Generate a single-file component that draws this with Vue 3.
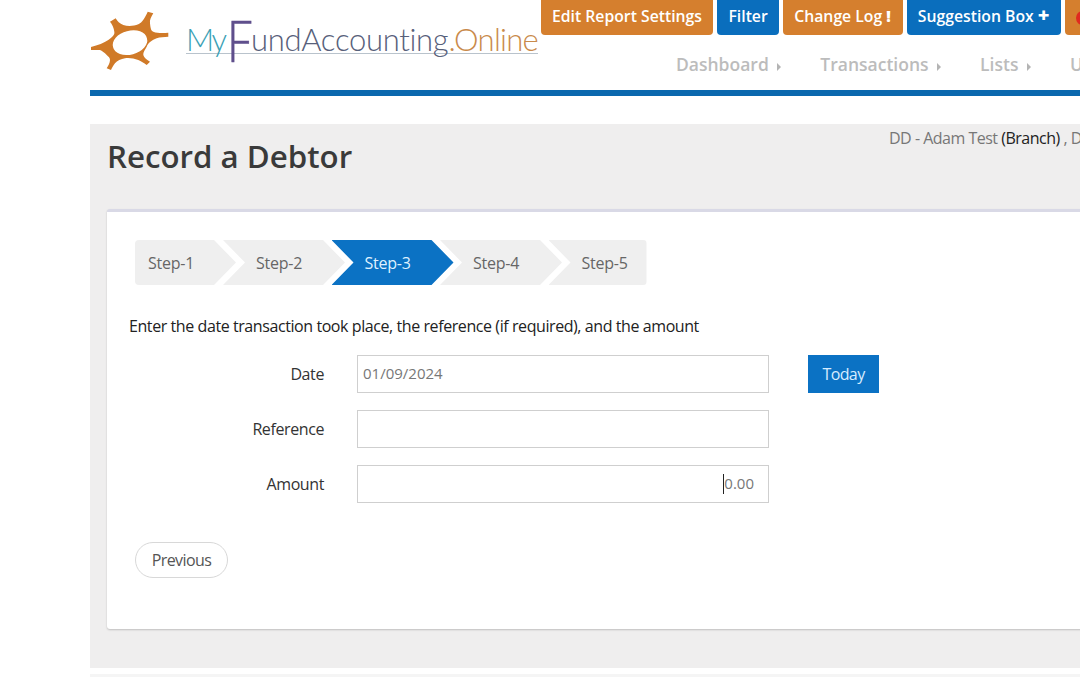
<script setup>
const steps = ['Step-1', 'Step-2', 'Step-3', 'Step-4', 'Step-5'];
const current = 2;
const navItems = ['Dashboard', 'Transactions', 'Lists', 'Users'];
</script>

<template>
  <div class="page">
    <header class="header">
      <div class="logo">
        <svg class="logo-mark" width="82" height="64" viewBox="0 0 82 64">
          <path fill="#d07a28" fill-rule="evenodd" d="M1 37 C8 35 14 33 18.3 30 C22 27 25 25 24.3 21.7 C24 18 22 14 20 11.7 L25.7 8.3 C27 11 30 14 33.3 15 C38 16.5 44 16 48.3 14.3 C52 13 56 6 57.7 1.7 L63.3 3.3 C61 7 59.5 10 60 13.3 C60.5 18 61 21 63.3 21.7 C68 23.5 74 23 78.3 22.7 L78.3 26.7 C74 27 70 27 66.7 28.3 C62 30 58 33 56.7 36.7 C55 40 53 42 53.3 45 C54 48 57 50 60 51.7 L56.7 55 C54 53 51 51 48.3 50 C44 48.5 39 47.5 35 48.3 C31 49 27 50.5 25 53.3 C23.5 55 22 58 21 60 L16.7 58.3 C18 56 20 53 20 50 C20 48 18.5 46.5 16.7 45 C14.5 42.5 12 41 10 40 C7 40 4 40 1 40 Z M23.1 37.2 a17.5 11.5 -15 1 0 33.8 -9 a17.5 11.5 -15 1 0 -33.8 9 Z" />
        </svg>
        <div class="logo-text">
          <span class="logo-my">My</span><span class="logo-f">F</span><span class="logo-fund">undAccounting</span><span class="logo-online">.Online</span>
        </div>
      </div>
      <div class="header-right">
        <div class="top-buttons">
          <span class="top-btn orange">Edit Report Settings</span>
          <span class="top-btn blue filter">Filter</span>
          <span class="top-btn orange log">Change Log <b>!</b></span>
          <span class="top-btn blue">Suggestion Box <b class="plus">+</b></span>
          <span class="top-btn orange last"><i class="dot"></i></span>
        </div>
        <nav class="nav">
          <span v-for="item in navItems" :key="item" class="nav-item">
            {{ item }}
            <svg width="4" height="8" viewBox="0 0 4 8"><path d="M0 0 L4 4 L0 8 Z" fill="#b4b4b4" /></svg>
          </span>
        </nav>
      </div>
    </header>

    <main class="panel">
      <div class="panel-head">
        <h1>Record a Debtor</h1>
        <div class="branch">DD - Adam Test <strong>(Branch)</strong> , DD - Adam Test <strong>(Fund)</strong></div>
      </div>

      <section class="card">
        <div class="stepper">
          <div
            v-for="(step, i) in steps"
            :key="step"
            class="step"
            :class="{ active: i === current, first: i === 0, final: i === steps.length - 1 }"
          >
            {{ step }}
          </div>
        </div>

        <p class="intro">Enter the date transaction took place, the reference (if required), and the amount</p>

        <div class="form">
          <div class="row">
            <label>Date</label>
            <input class="field" type="text" value="01/09/2024" readonly />
            <button class="today">Today</button>
          </div>
          <div class="row">
            <label>Reference</label>
            <input class="field" type="text" />
          </div>
          <div class="row">
            <label>Amount</label>
            <div class="amount-wrap">
              <input class="field right" type="text" value="0.00" readonly />
              <span class="caret"></span>
            </div>
          </div>
        </div>

        <button class="previous">Previous</button>
      </section>
    </main>
    <div class="footer-strip"></div>
  </div>
</template>

<style>
html, body {
  margin: 0;
  overflow: hidden;
  background: #fff;
}
</style>

<style scoped>
.page {
  margin-left: 90px;
  width: 1300px;
  height: 677px;
  font-family: "Open Sans", "Liberation Sans", sans-serif;
  color: #333;
}

.header {
  display: flex;
  height: 90px;
  border-bottom: 6px solid #0b68ae;
}

.logo {
  width: 451px;
  display: flex;
  align-items: flex-start;
}

.logo-mark {
  margin-top: 10px;
  flex: none;
}

.logo-text {
  margin: 18px 0 0 14px;
  height: 35px;
  width: 352px;
  display: flex;
  align-items: flex-end;
  border-bottom: 1px solid #b9c3cc;
  font-family: "Lato", "Liberation Sans", sans-serif;
  font-weight: 300;
  font-size: 31px;
  line-height: 28px;
  white-space: nowrap;
}

.logo-my {
  color: #3a9fb5;
  letter-spacing: -2.2px;
}

.logo-f {
  display: inline-block;
  color: #5f4f8c;
  font-size: 57px;
  -webkit-text-stroke: 0.6px #5f4f8c;
  line-height: 46px;
  height: 46px;
  margin: 0 -8px 0 2px;
  transform: translateY(10px) scaleX(0.8);
  transform-origin: left center;
}

.logo-fund {
  color: #57607a;
  letter-spacing: -0.3px;
}

.logo-online {
  color: #c98a4b;
  letter-spacing: -0.7px;
}

.header-right {
  display: flex;
  flex-direction: column;
}

.top-buttons {
  display: flex;
  gap: 4px;
  margin-top: -6px;
}

.top-btn {
  height: 41px;
  line-height: 45px;
  padding: 0 11px;
  border-radius: 4px;
  color: #fff;
  font-size: 15.75px;
  font-weight: 600;
  text-align: center;
  white-space: nowrap;
}

.top-btn b {
  font-weight: 800;
}

.filter {
  padding: 0 11.5px;
}

.log {
  padding: 0 12px 0 11px;
}

.plus {
  font-size: 20px;
  line-height: 10px;
}

.orange {
  background: #d57f2e;
}

.blue {
  background: #0a6ebd;
}

.last {
  width: 60px;
  display: flex;
  align-items: center;
  padding-top: 6px;
  box-sizing: border-box;
}

.dot {
  width: 13px;
  height: 14px;
  border-radius: 50%;
  background: #e02a20;
}

.nav {
  display: flex;
  gap: 39px;
  margin: 17px 0 0 135px;
  font-size: 17.5px;
  font-weight: 600;
  color: #bcbcbc;
  line-height: 24px;
  white-space: nowrap;
}

.nav-item svg {
  margin-left: 4px;
}

.panel {
  margin-top: 28px;
  height: 544px;
  background: #efeeee;
  padding: 0 0 0 17px;
  box-sizing: border-box;
}

.panel-head {
  display: flex;
  justify-content: space-between;
  height: 85px;
}

h1 {
  margin: 11px 0 0;
  font-size: 31.25px;
  line-height: 42px;
  font-weight: 600;
  color: #3a3a3a;
}

.branch {
  position: absolute;
  left: 889px;
  top: 128px;
  font-size: 16px;
  line-height: 20px;
  letter-spacing: -0.5px;
  color: #777;
  white-space: nowrap;
}

.branch strong {
  font-weight: 400;
  color: #222;
}

.card {
  height: 420px;
  box-sizing: border-box;
  background: #fff;
  border-top: 3px solid #d9d9e6;
  border-radius: 3px 0 0 3px;
  box-shadow: 0 1px 2px rgba(0, 0, 0, 0.2);
  padding: 28px 0 0 28px;
}

.stepper {
  display: flex;
  height: 45px;
}

.step {
  width: 122px;
  margin-right: -13.5px;
  box-sizing: border-box;
  padding-left: 33px;
  background: #efefef;
  color: #666;
  font-size: 16px;
  line-height: 47px;
  letter-spacing: -0.25px;
  clip-path: polygon(0 0, calc(100% - 22px) 0, 100% 50%, calc(100% - 22px) 100%, 0 100%, 22px 50%);
}

.step.first {
  width: 101px;
  margin-right: -13px;
  padding-left: 13px;
  border-radius: 4px 0 0 4px;
  clip-path: polygon(0 0, calc(100% - 22px) 0, 100% 50%, calc(100% - 22px) 100%, 0 100%);
}

.step.final {
  width: 98px;
  margin-right: 0;
  border-radius: 0 4px 4px 0;
  clip-path: polygon(0 0, 100% 0, 100% 100%, 0 100%, 22px 50%);
}

.step.active {
  background: #0b72c4;
  color: #dff1ff;
}

.intro {
  margin: 30px 0 0 -6px;
  font-size: 16px;
  line-height: 22px;
  letter-spacing: -0.42px;
  color: #222;
}

.form {
  margin-top: 18px;
  display: flex;
  flex-direction: column;
  gap: 17px;
}

.row {
  display: flex;
  align-items: center;
  height: 38px;
}

label {
  width: 189px;
  text-align: right;
  font-size: 16px;
  letter-spacing: -0.4px;
  color: #333;
}

.field {
  margin-left: 33px;
  width: 412px;
  height: 38px;
  box-sizing: border-box;
  border: 1px solid #cfcfcf;
  padding: 0 5px 2px;
  outline: none;
  font-family: inherit;
  font-size: 15px;
  color: #777;
}

.field.right {
  text-align: right;
  padding-right: 14px;
}

.amount-wrap {
  position: relative;
  display: flex;
}

.caret {
  position: absolute;
  left: 399px;
  top: 9px;
  width: 1px;
  height: 20px;
  background: #222;
}

.today {
  margin-left: 39px;
  width: 71px;
  height: 38px;
  padding: 0;
  border: none;
  background: #0b72c4;
  color: #d6ecff;
  font-family: inherit;
  font-size: 16px;
  letter-spacing: -0.6px;
}

.previous {
  display: block;
  margin-top: 39px;
  width: 93px;
  height: 36px;
  padding: 0;
  background: #fff;
  border: 1px solid #d8d8d8;
  border-radius: 18px;
  font-family: inherit;
  font-size: 16px;
  letter-spacing: -0.6px;
  color: #555;
}

.footer-strip {
  margin-top: 6px;
  height: 3px;
  background: #f5f5f5;
}
</style>
